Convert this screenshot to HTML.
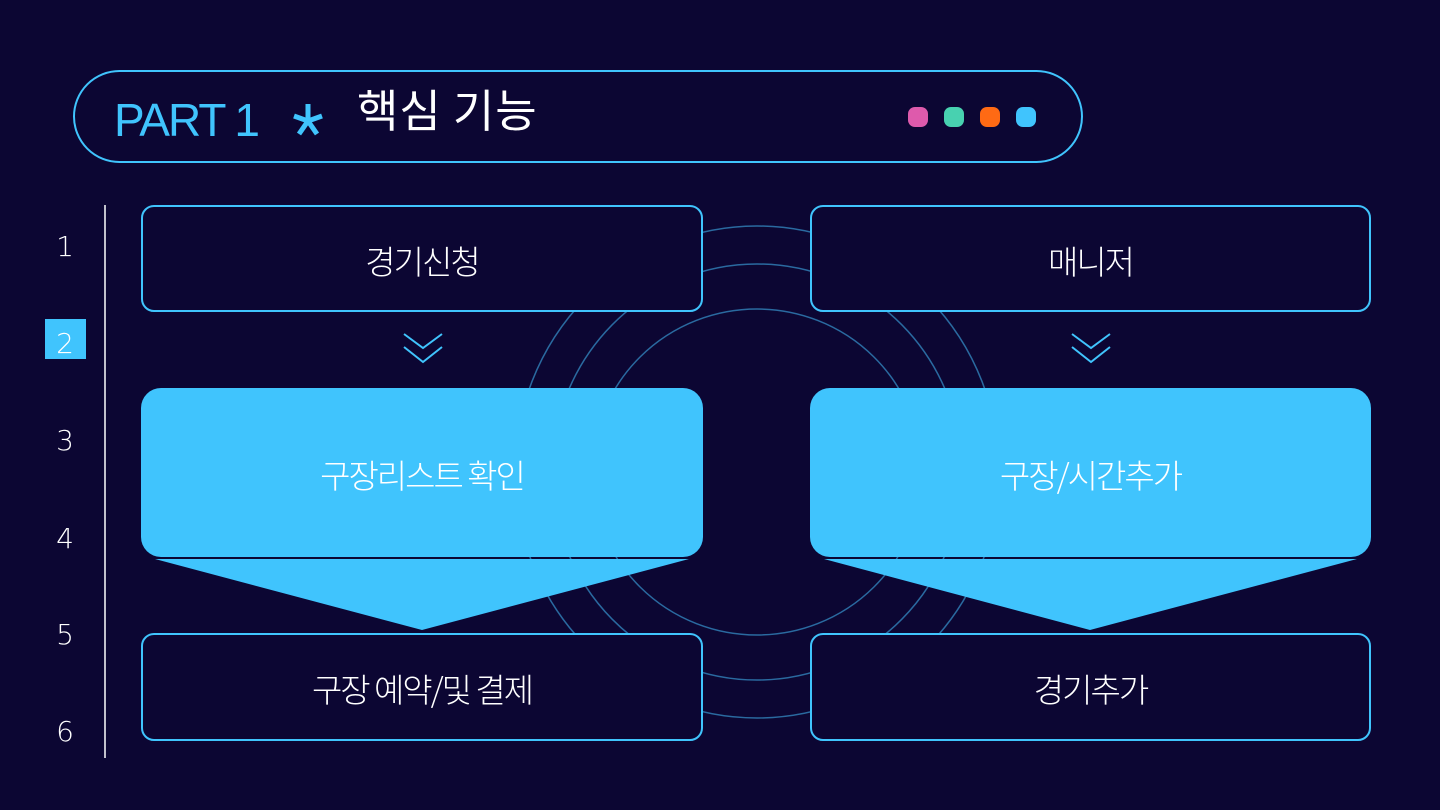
<!DOCTYPE html>
<html><head><meta charset="utf-8"><style>
html,body{margin:0;padding:0;background:#0c0633;}
body{width:1440px;height:810px;overflow:hidden;position:relative;font-family:"Liberation Sans","Noto Sans CJK KR",sans-serif;}
svg{position:absolute;left:0;top:0}
.t{position:absolute;color:#fff;font-family:"Noto Sans CJK KR",sans-serif;font-weight:300;font-size:33px;letter-spacing:-2px;text-align:center;line-height:1}
.n{position:absolute;width:40px;text-align:center;color:#fff;font-family:"DejaVu Sans","Liberation Sans",sans-serif;font-weight:300;font-size:28px;line-height:1;left:45px}
</style></head><body>
<svg width="1440" height="810" viewBox="0 0 1440 810">
 <g fill="none" stroke="#2a6aa0" stroke-width="1.5">
  <ellipse cx="757" cy="472" rx="165" ry="163"/>
  <ellipse cx="757" cy="472" rx="205" ry="208"/>
  <ellipse cx="757" cy="472" rx="242" ry="246"/>
 </g>
 <rect x="74" y="71" width="1008" height="91" rx="45.5" fill="#0c0633" stroke="#40c4fd" stroke-width="2"/>
 <rect x="908" y="107" width="20" height="20" rx="7" fill="#de5aac"/>
 <rect x="944" y="107" width="20" height="20" rx="7" fill="#48d1b0"/>
 <rect x="980" y="107" width="20" height="20" rx="7" fill="#ff6a14"/>
 <rect x="1016" y="107" width="20" height="20" rx="7" fill="#40c4fd"/>
 <line x1="105" y1="205" x2="105" y2="758" stroke="#fff" stroke-width="1.5"/>
 <rect x="45" y="319" width="41" height="40" fill="#40c4fd"/>
 <g fill="#0c0633" stroke="#40c4fd" stroke-width="2">
  <rect x="142" y="206" width="560" height="105" rx="12"/>
  <rect x="811" y="206" width="559" height="105" rx="12"/>
  <rect x="142" y="634" width="560" height="106" rx="12"/>
  <rect x="811" y="634" width="559" height="106" rx="12"/>
 </g>
 <g fill="#40c4fd">
  <rect x="141" y="388" width="562" height="169" rx="20"/>
  <polygon points="155,559 689,559 422,630"/>
  <rect x="810" y="388" width="561" height="169" rx="20"/>
  <polygon points="824,559 1357,559 1090,630"/>
 </g>
 <g fill="none" stroke="#40c4fd" stroke-width="2">
  <polyline points="404,334 423,348 442,334"/>
  <polyline points="404,347 423,362 442,347"/>
  <polyline points="1072,334 1091,348 1110,334"/>
  <polyline points="1072,347 1091,362 1110,347"/>
 </g>
 <g stroke="#40c4fd" stroke-width="5" stroke-linecap="butt">
  <line x1="308" y1="104" x2="308" y2="121"/>
  <line x1="308" y1="121" x2="294" y2="116"/>
  <line x1="308" y1="121" x2="322" y2="116"/>
  <line x1="308" y1="121" x2="299" y2="134"/>
  <line x1="308" y1="121" x2="317" y2="134"/>
 </g>
</svg>
<div style="position:absolute;left:114px;top:97px;color:#40c4fd;font-family:'Liberation Sans',sans-serif;font-size:46px;letter-spacing:-2px;line-height:1">PART 1</div>
<div style="position:absolute;left:357px;top:85px;color:#fff;font-family:'Noto Sans CJK KR',sans-serif;font-weight:400;font-size:45px;letter-spacing:1px;line-height:1">핵심 기능</div>
<div class="n" style="top:233px">1</div>
<div class="n" style="top:330px">2</div>
<div class="n" style="top:427px">3</div>
<div class="n" style="top:525px">4</div>
<div class="n" style="top:621px">5</div>
<div class="n" style="top:718px">6</div>
<div class="t" style="left:142px;width:560px;top:244px">경기신청</div>
<div class="t" style="left:811px;width:559px;top:244px">매니저</div>
<div class="t" style="left:141px;width:562px;top:458px">구장리스트 확인</div>
<div class="t" style="left:810px;width:561px;top:458px">구장/시간추가</div>
<div class="t" style="left:142px;width:560px;top:672px">구장 예약/및 결제</div>
<div class="t" style="left:811px;width:559px;top:672px">경기추가</div>
</body></html>
